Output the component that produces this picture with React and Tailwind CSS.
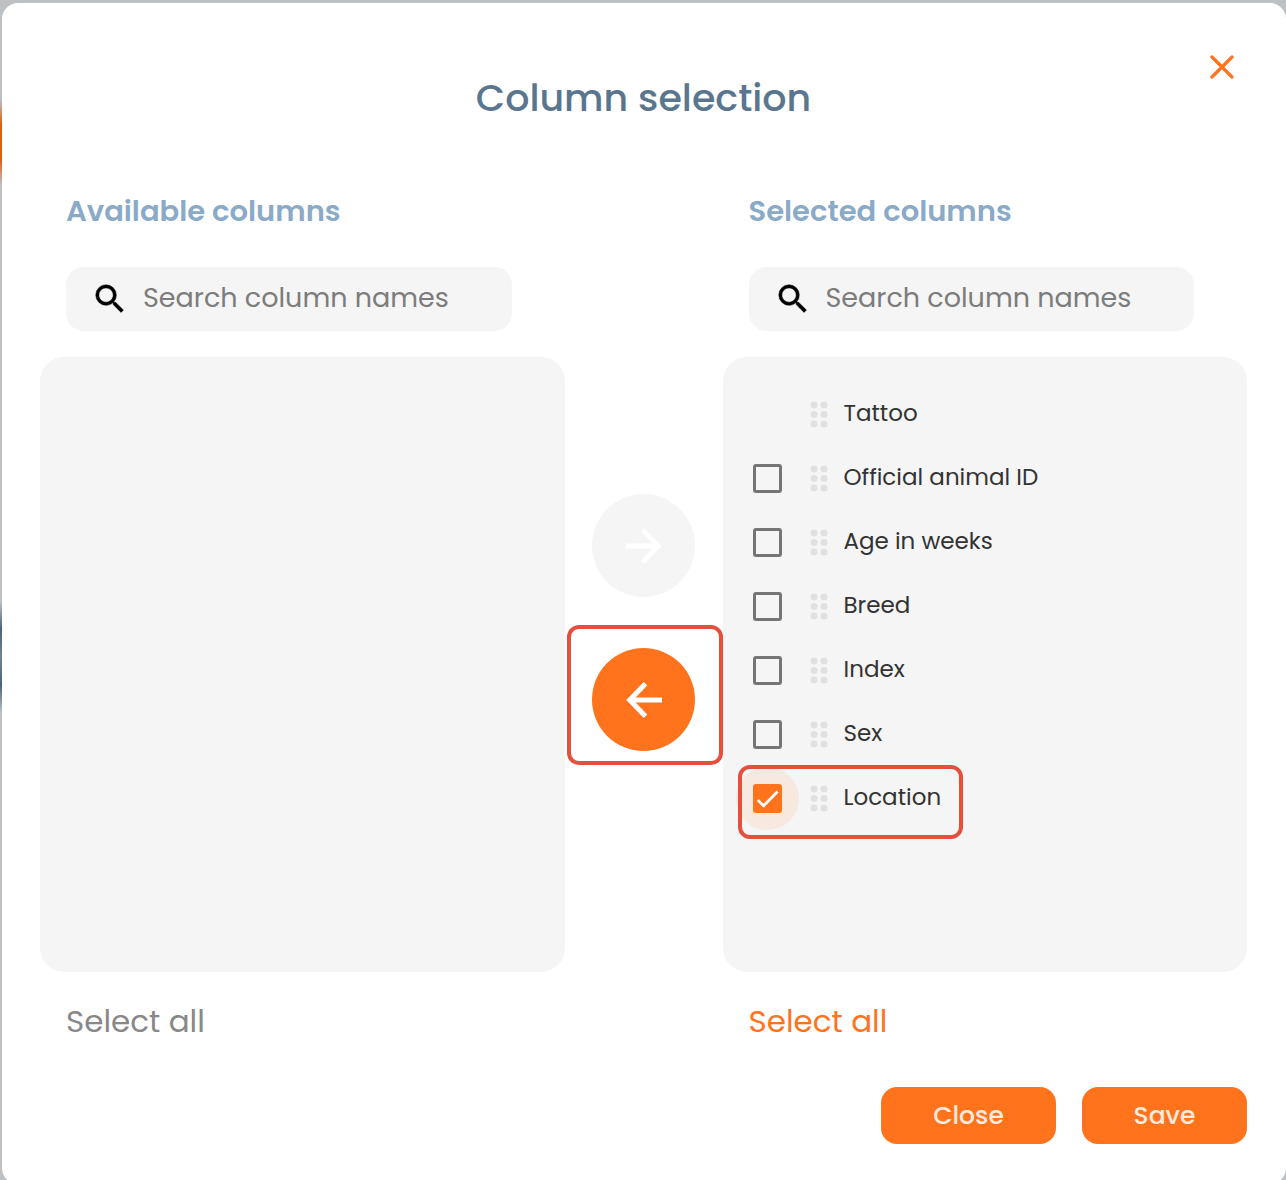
import React, { useState } from "react";

const COLUMNS = [
  { name: "Tattoo", fixed: true },
  { name: "Official animal ID" },
  { name: "Age in weeks" },
  { name: "Breed" },
  { name: "Index" },
  { name: "Sex" },
  { name: "Location" },
];

function Grip() {
  return (
    <svg viewBox="0 0 18 27" className="h-[27px] w-[18px] shrink-0 fill-[#e0e0e0]" aria-hidden="true">
      {[4, 13.5, 23].map((y) => (
        <React.Fragment key={y}>
          <circle cx="4" cy={y} r="3.5" />
          <circle cx="14" cy={y} r="3.5" />
        </React.Fragment>
      ))}
    </svg>
  );
}

function Arrow({ left }) {
  return (
    <svg
      viewBox="0 0 36 36"
      className={left ? "size-9 rotate-180" : "size-9"}
      fill="none"
      stroke="white"
      strokeWidth="5"
      aria-hidden="true"
    >
      <path d="M0 18H32M16.5 1.8L32.3 18L16.5 34.2" />
    </svg>
  );
}

function Highlight({ className }) {
  return (
    <span
      className={"pointer-events-none absolute rounded-xl border-4 border-[#e5503d] " + className}
      aria-hidden="true"
    />
  );
}

function SearchBox({ label }) {
  return (
    <label className="mr-[53px] ml-[26px] mt-[38px] flex h-16 items-center gap-3.5 rounded-[18px] bg-[#f5f5f5] pl-[25px] pr-4">
      <svg
        viewBox="0 0 24 24"
        className="size-[38px] shrink-0"
        fill="black"
        stroke="black"
        strokeWidth="0.3"
        aria-hidden="true"
      >
        <path d="M15.5 14h-.79l-.28-.27A6.471 6.471 0 0 0 16 9.5 6.5 6.5 0 1 0 9.5 16c1.61 0 3.09-.59 4.23-1.57l.27.28v.79l5 4.99L20.49 19l-4.99-5zm-6 0C7.01 14 5 11.99 5 9.5S7.01 5 9.5 5 14 7.01 14 9.5 11.99 14 9.5 14z" />
      </svg>
      <input
        type="search"
        aria-label={label}
        placeholder="Search column names"
        className="w-full min-w-0 bg-transparent pb-0.5 text-[27px] leading-9 text-[#333] outline-none placeholder:text-[#7c7c7c]"
      />
    </label>
  );
}

function ColumnRow({ column, checked, onToggle, highlighted }) {
  return (
    <li className="relative flex h-16 items-center">
      {column.fixed ? (
        <span className="size-[29px] shrink-0" />
      ) : (
        <span className="relative flex size-[29px] shrink-0">
          {checked && <span className="absolute -inset-[17px] rounded-full bg-[#f7e8e0]" />}
          <input
            id={column.name}
            type="checkbox"
            checked={checked}
            onChange={onToggle}
            className="relative size-[29px] appearance-none rounded-[3px] border-3 border-[#757575] checked:border-[#ff731d] checked:bg-[#ff731d]"
          />
          {checked && (
            <svg
              viewBox="0 0 29 29"
              className="pointer-events-none absolute inset-0 size-[29px]"
              fill="none"
              stroke="white"
              strokeWidth="2.8"
              aria-hidden="true"
            >
              <path d="M4.8 16L10.6 21.7L24.6 7.6" />
            </svg>
          )}
        </span>
      )}
      <span className="ml-7 flex">
        <Grip />
      </span>
      <label htmlFor={column.fixed ? undefined : column.name} className="ml-4 pb-0.5 text-[23px] text-[#333]">
        {column.name}
      </label>
      {highlighted && <Highlight className="-left-[15px] -top-px h-[74px] w-[225px]" />}
    </li>
  );
}

export default function App() {
  const [picked, setPicked] = useState(["Location"]);
  const toggle = (name) =>
    setPicked((now) => (now.includes(name) ? now.filter((n) => n !== name) : [...now, name]));

  return (
    <div className="flex h-screen items-start overflow-hidden bg-[#bdc1c4] pt-[3px] font-['Poppins','Inter',sans-serif]">
      <div className="flex h-full w-0.5 shrink-0 flex-col" aria-hidden="true">
        <div className="mt-24 h-[86px] bg-[linear-gradient(#bdc1c4,#dd5f12_30%,#dd5f12_70%,#bdc1c4)]" />
        <div className="mt-[416px] h-[112px] bg-[linear-gradient(#bdc1c4,#49637d_25%,#6f8592_50%,#49637d_75%,#bdc1c4)]" />
      </div>
      <div
        role="dialog"
        aria-labelledby="dialog-title"
        className="relative min-w-0 flex-1 rounded-2xl bg-white pb-10 pl-[38px] pr-[39px] pt-[71px]"
      >
        <button type="button" aria-label="Close dialog" className="absolute right-[52px] top-[52px]">
          <svg
            viewBox="0 0 24 24"
            className="size-6"
            fill="none"
            stroke="#ff731d"
            strokeWidth="3.2"
            strokeLinecap="round"
            aria-hidden="true"
          >
            <path d="M2 2L22 22M22 2L2 22" />
          </svg>
        </button>

        <h1 id="dialog-title" className="text-center text-[38px] font-medium leading-[48px] text-[#5a768f]">
          Column selection
        </h1>

        <div className="mt-[71px] grid grid-cols-[1fr_158px_1fr]">
          <section>
            <h2 className="ml-[26px] text-[29px] font-semibold leading-9 text-[#8aaac8]">Available columns</h2>
            <SearchBox label="Search available columns" />
            <div className="mt-[26px] h-[615px] rounded-3xl bg-[#f5f5f5]" />
            <button type="button" disabled className="ml-[26px] mt-[29px] text-[31px] leading-10 text-[#888]">
              Select all
            </button>
          </section>

          <div className="flex flex-col items-center gap-[51px] pt-[301px]">
            <button
              type="button"
              disabled
              aria-label="Add to selected columns"
              className="flex size-[103px] items-center justify-center rounded-full bg-[#f5f5f5]"
            >
              <Arrow />
            </button>
            <div className="relative">
              <button
                type="button"
                aria-label="Remove from selected columns"
                className="flex size-[103px] items-center justify-center rounded-full bg-[#ff731d]"
              >
                <Arrow left />
              </button>
              <Highlight className="-bottom-3.5 -left-[25px] -right-7 -top-[23px]" />
            </div>
          </div>

          <section>
            <h2 className="ml-[26px] text-[29px] font-semibold leading-9 text-[#8aaac8]">Selected columns</h2>
            <SearchBox label="Search selected columns" />
            <ul className="mt-[26px] h-[615px] rounded-3xl bg-[#f5f5f5] pl-[30px] pt-[25px]">
              {COLUMNS.map((column) => (
                <ColumnRow
                  key={column.name}
                  column={column}
                  checked={picked.includes(column.name)}
                  onToggle={() => toggle(column.name)}
                  highlighted={column.name === "Location"}
                />
              ))}
            </ul>
            <button
              type="button"
              onClick={() => setPicked(COLUMNS.filter((c) => !c.fixed).map((c) => c.name))}
              className="ml-[26px] mt-[29px] text-[31px] leading-10 text-[#ff731d]"
            >
              Select all
            </button>
          </section>
        </div>

        <div className="mt-[46px] flex justify-end gap-[26px]">
          <button
            type="button"
            className="h-[57px] w-[175px] rounded-2xl bg-[#ff731d] text-[25px] font-medium text-[#ffeadd]"
          >
            Close
          </button>
          <button
            type="button"
            className="h-[57px] w-[165px] rounded-2xl bg-[#ff731d] text-[25px] font-medium text-[#ffeadd]"
          >
            Save
          </button>
        </div>
      </div>
    </div>
  );
}
